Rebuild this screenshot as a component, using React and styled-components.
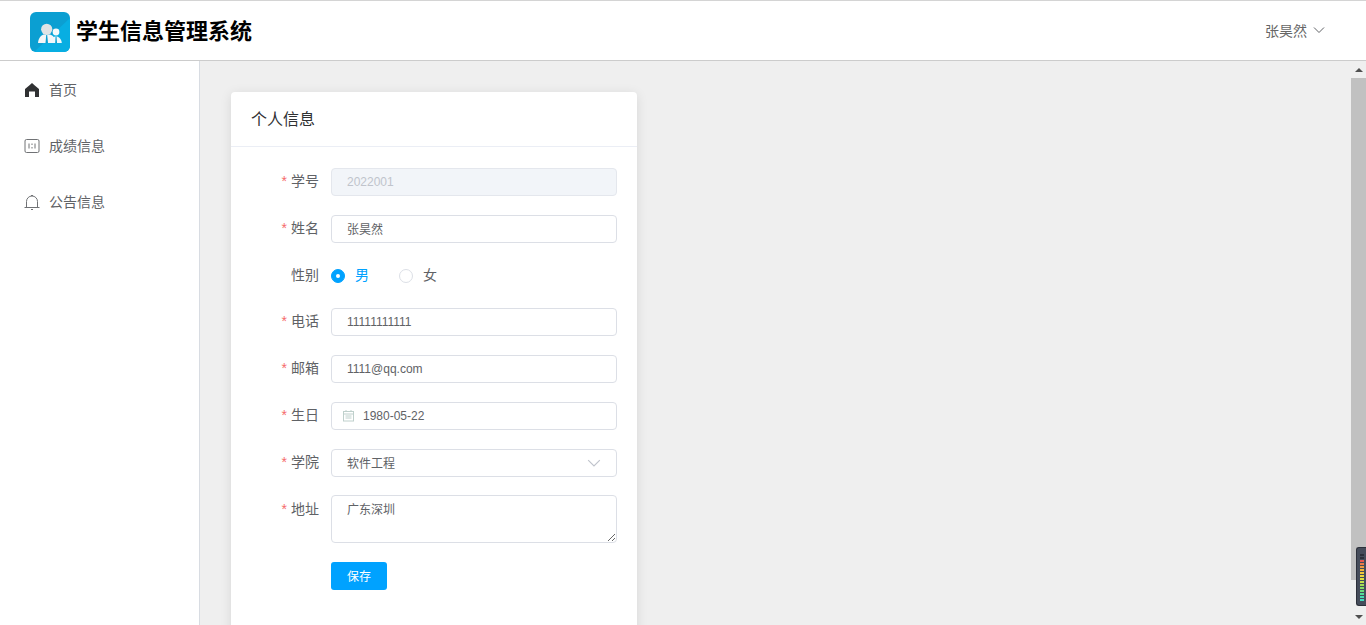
import React from "react";
import styled, { createGlobalStyle } from "styled-components";

const GlobalStyle = createGlobalStyle`
  html, body {
    margin: 0;
    padding: 0;
    height: 625px;
    overflow: hidden;
    font-family: "Liberation Sans", "Noto Sans CJK SC", sans-serif;
  }
  * { box-sizing: border-box; }
`;

const Page = styled.div`
  display: flex;
  flex-direction: column;
  height: 625px;
  position: relative;
`;

const Header = styled.header`
  height: 61px;
  flex: none;
  display: flex;
  align-items: center;
  justify-content: space-between;
  padding: 2px 41px 0 30px;
  background: #fff;
  border-top: 1px solid #d4d4d4;
  border-bottom: 1px solid #ccc;
`;

const Brand = styled.div`
  display: flex;
  align-items: center;
  gap: 6px;
`;

const BrandName = styled.div`
  padding-bottom: 6px;
  font-size: 22px;
  font-weight: 700;
  color: #000;
`;

const User = styled.div`
  display: flex;
  align-items: center;
  gap: 6px;
  padding-bottom: 4px;
  font-size: 14px;
  color: #666;
`;

const Body = styled.div`
  flex: 1;
  display: flex;
  min-height: 0;
`;

const Sidebar = styled.aside`
  width: 200px;
  flex: none;
  padding-top: 1px;
  background: #fff;
  border-right: 1px solid #d8dce2;
`;

const MenuItem = styled.div`
  height: 56px;
  display: flex;
  align-items: center;
  gap: 9px;
  padding-left: 24px;
  font-size: 14px;
  color: #606266;
`;

const MenuText = styled.span`
  padding-bottom: 2px;
`;

const Main = styled.main`
  flex: 1;
  min-width: 0;
  padding: 31px;
  background: #efefef;
  overflow: hidden;
`;

const Card = styled.section`
  width: 406px;
  min-height: 600px;
  background: #fff;
  border-radius: 4px;
  box-shadow: 0 2px 12px rgba(0, 0, 0, 0.1);
`;

const CardHeader = styled.div`
  height: 55px;
  display: flex;
  align-items: center;
  padding: 0 20px 2px;
  font-size: 16px;
  color: #303133;
  border-bottom: 1px solid #ebeef5;
`;

const Form = styled.form`
  display: flex;
  flex-direction: column;
  padding: 21px 20px;
`;

const Row = styled.div`
  display: flex;
  margin-bottom: ${(props) => props.$gap || 19}px;
`;

const Label = styled.label`
  width: 80px;
  flex: none;
  height: 28px;
  padding-right: 12px;
  text-align: right;
  font-size: 14px;
  line-height: ${(props) => (props.$tall ? 28 : 26)}px;
  color: #606266;
`;

const Star = styled.span`
  color: #f56c6c;
  margin-right: 4px;
`;

const Input = styled.input`
  flex: 1;
  min-width: 0;
  height: 28px;
  padding: 0 15px ${(props) => (props.$cjk ? 2 : 0)}px;
  font: 12px "Liberation Sans", "Noto Sans CJK SC", sans-serif;
  color: #606266;
  background: #fff;
  border: 1px solid #dcdfe6;
  border-radius: 4px;
  outline: none;
  &:disabled {
    color: #c0c4cc;
    background: #f2f5f9;
    border-color: #e4e7ed;
  }
`;

const Field = styled.div`
  flex: 1;
  min-width: 0;
  height: 28px;
  display: flex;
  align-items: center;
  justify-content: space-between;
  padding: 0 15px;
  font-size: 12px;
  color: #606266;
  border: 1px solid #dcdfe6;
  border-radius: 4px;
`;

const FieldText = styled.span`
  padding-bottom: 2px;
`;

const DateField = styled(Field)`
  justify-content: flex-start;
  gap: 8px;
  padding: 0 15px 0 11px;
`;

const Radios = styled.div`
  display: flex;
  align-items: center;
  height: 28px;
  gap: 30px;
  font-size: 14px;
`;

const Radio = styled.div`
  display: flex;
  align-items: center;
  gap: 10px;
  color: ${(props) => (props.$checked ? "#00a2ff" : "#606266")};
`;

const RadioText = styled.span`
  padding-bottom: 5px;
`;

const RadioDot = styled.span`
  width: 14px;
  height: 14px;
  border-radius: 50%;
  display: flex;
  align-items: center;
  justify-content: center;
  background: ${(props) => (props.$checked ? "#00a2ff" : "#fff")};
  border: 1px solid ${(props) => (props.$checked ? "#00a2ff" : "#dcdfe6")};
  &::after {
    content: "";
    width: 4px;
    height: 4px;
    border-radius: 50%;
    background: ${(props) => (props.$checked ? "#fff" : "transparent")};
  }
`;

const TextArea = styled.textarea`
  flex: 1;
  min-width: 0;
  height: 48px;
  padding: 5px 15px;
  font: 12px/1.5 "Liberation Sans", "Noto Sans CJK SC", sans-serif;
  color: #606266;
  border: 1px solid #dcdfe6;
  border-radius: 4px;
  outline: none;
`;

const Actions = styled.div`
  padding-left: 80px;
`;

const SaveButton = styled.button`
  width: 56px;
  height: 28px;
  padding: 0 0 2px;
  font: 12px "Liberation Sans", "Noto Sans CJK SC", sans-serif;
  color: #fff;
  background: #00a2ff;
  border: 0;
  border-radius: 3px;
`;

const ScrollBar = styled.div`
  width: 15px;
  flex: none;
  display: flex;
  flex-direction: column;
  background: #efefef;
`;

const ScrollArrow = styled.div`
  height: 17px;
  flex: none;
  display: flex;
  align-items: center;
  justify-content: center;
  &::after {
    content: "";
    border-left: 4px solid transparent;
    border-right: 4px solid transparent;
    border-${(props) => (props.$down ? "top" : "bottom")}: 4px solid #505050;
  }
`;

const ScrollTrack = styled.div`
  flex: 1;
  padding-bottom: 28px;
  display: flex;
`;

const ScrollThumb = styled.div`
  flex: 1;
  background: #c1c1c1;
`;

const Meter = styled.div`
  position: absolute;
  right: 0;
  top: 547px;
  width: 10px;
  height: 59px;
  display: flex;
  flex-direction: column;
  gap: 1px;
  padding: 6px 2px 0 3px;
  background: #454c5a;
  border: 1px solid #2c303a;
  border-right: 0;
  border-radius: 3px 0 0 3px;
`;

const MeterBar = styled.span`
  height: 2px;
  flex: none;
  background: ${(props) => props.$color};
`;

const meterColors = [
  "#2c303a", "#2c303a", "#e8584f", "#ee7a48", "#f09a40", "#f2b53a", "#f2c83a",
  "#eed63c", "#dfe040", "#c4e04a", "#a6de55", "#88dc66", "#6cdc7c", "#55dc98",
  "#48dcb0", "#44dcc0",
];

const HomeIcon = () => (
  <svg width="16" height="16" viewBox="0 0 16 16">
    <path
      fillRule="evenodd"
      d="M8 1 5.500 3.200 1 7v8h14V7L10.500 3.200zM5 9.500h6V15H5z"
      fill="#303133"
    />
  </svg>
);

const ScoreIcon = () => (
  <svg width="16" height="16" viewBox="0 0 16 16" fill="none" stroke="#707275">
    <rect x="1" y="1.500" width="14" height="13" rx="1.500" />
    <path d="M5 5.500v5M11 5.500v5M8 5.500V7M8 9v1.500" />
  </svg>
);

const BellIcon = () => (
  <svg width="16" height="16" viewBox="0 0 16 16" fill="none" stroke="#707275">
    <path d="M0.500 13.500h15M2.500 13.500V7.500a5.500 5.500 0 0 1 11 0v6" />
    <path d="M7 1.500h2M7 15.500h2" />
  </svg>
);

const Chevron = ({ size = 12, color = "#606266" }) => (
  <svg width={size} height={size} viewBox="0 0 12 12" fill="none" stroke={color}>
    <path d="M1 3.500 6 8.500l5-5" />
  </svg>
);

const CalendarIcon = () => (
  <svg width="12" height="12" viewBox="0 0 12 12" fill="none" stroke="#bfd0cc">
    <rect x="0.500" y="1.500" width="10" height="9.500" />
    <path d="M0.500 4h10M3 0v2M8 0v2M2.500 6h6M2.500 8h6" />
  </svg>
);

const Logo = () => (
  <svg width="40" height="40" viewBox="0 0 40 40">
    <defs>
      <clipPath id="logoClip">
        <rect width="40" height="40" rx="6" />
      </clipPath>
    </defs>
    <g clipPath="url(#logoClip)">
      <rect width="40" height="40" fill="#0b9fd2" />
      <path d="M40 6V40H4z" fill="#08aee2" />
      <path d="M8 31c.3-5 3-7.500 5.500-8.500h6.500c3 1 5.500 3.500 6 8.500z" fill="#f4f6f7" />
      <circle cx="16.700" cy="17.300" r="5.600" fill="#dfe3e5" />
      <path d="M16.200 23h1l.8 8h-2.500z" fill="#0a9ed0" />
      <path d="M20.500 31c.3-4 2.500-6.500 5.500-6.500s5.400 2.500 5.800 6.500z" fill="#f0f8fb" />
      <circle cx="26" cy="20" r="3.400" fill="#f4fafc" />
      <path d="M25.600 24.500h.9l.5 6.500h-1.800z" fill="#0a9ed0" />
    </g>
  </svg>
);

const RequiredLabel = ({ children, tall }) => (
  <Label $tall={tall}>
    <Star>*</Star>
    {children}
  </Label>
);

const App = () => {
  return (
    <Page>
      <GlobalStyle />
      <Header>
        <Brand>
          <Logo />
          <BrandName>学生信息管理系统</BrandName>
        </Brand>
        <User>
          张昊然
          <Chevron />
        </User>
      </Header>
      <Body>
        <Sidebar>
          <MenuItem>
            <HomeIcon />
            <MenuText>首页</MenuText>
          </MenuItem>
          <MenuItem>
            <ScoreIcon />
            <MenuText>成绩信息</MenuText>
          </MenuItem>
          <MenuItem>
            <BellIcon />
            <MenuText>公告信息</MenuText>
          </MenuItem>
        </Sidebar>
        <Main>
          <Card>
            <CardHeader>个人信息</CardHeader>
            <Form>
              <Row>
                <RequiredLabel>学号</RequiredLabel>
                <Input disabled value="2022001" readOnly />
              </Row>
              <Row>
                <RequiredLabel>姓名</RequiredLabel>
                <Input $cjk value="张昊然" readOnly />
              </Row>
              <Row $gap={18}>
                <Label>性别</Label>
                <Radios>
                  <Radio $checked>
                    <RadioDot $checked />
                    <RadioText>男</RadioText>
                  </Radio>
                  <Radio>
                    <RadioDot />
                    <RadioText>女</RadioText>
                  </Radio>
                </Radios>
              </Row>
              <Row>
                <RequiredLabel>电话</RequiredLabel>
                <Input value="11111111111" readOnly />
              </Row>
              <Row>
                <RequiredLabel>邮箱</RequiredLabel>
                <Input value="1111@qq.com" readOnly />
              </Row>
              <Row>
                <RequiredLabel>生日</RequiredLabel>
                <DateField>
                  <CalendarIcon />
                  1980-05-22
                </DateField>
              </Row>
              <Row $gap={18}>
                <RequiredLabel>学院</RequiredLabel>
                <Field>
                  <FieldText>软件工程</FieldText>
                  <Chevron size={14} color="#c0c4cc" />
                </Field>
              </Row>
              <Row>
                <RequiredLabel tall>地址</RequiredLabel>
                <TextArea value="广东深圳" readOnly />
              </Row>
              <Actions>
                <SaveButton type="button">保存</SaveButton>
              </Actions>
            </Form>
          </Card>
        </Main>
        <ScrollBar>
          <ScrollArrow />
          <ScrollTrack>
            <ScrollThumb />
          </ScrollTrack>
          <ScrollArrow $down />
        </ScrollBar>
      </Body>
      <Meter>
        {meterColors.map((color, i) => (
          <MeterBar key={i} $color={color} />
        ))}
      </Meter>
    </Page>
  );
};

export default App;
